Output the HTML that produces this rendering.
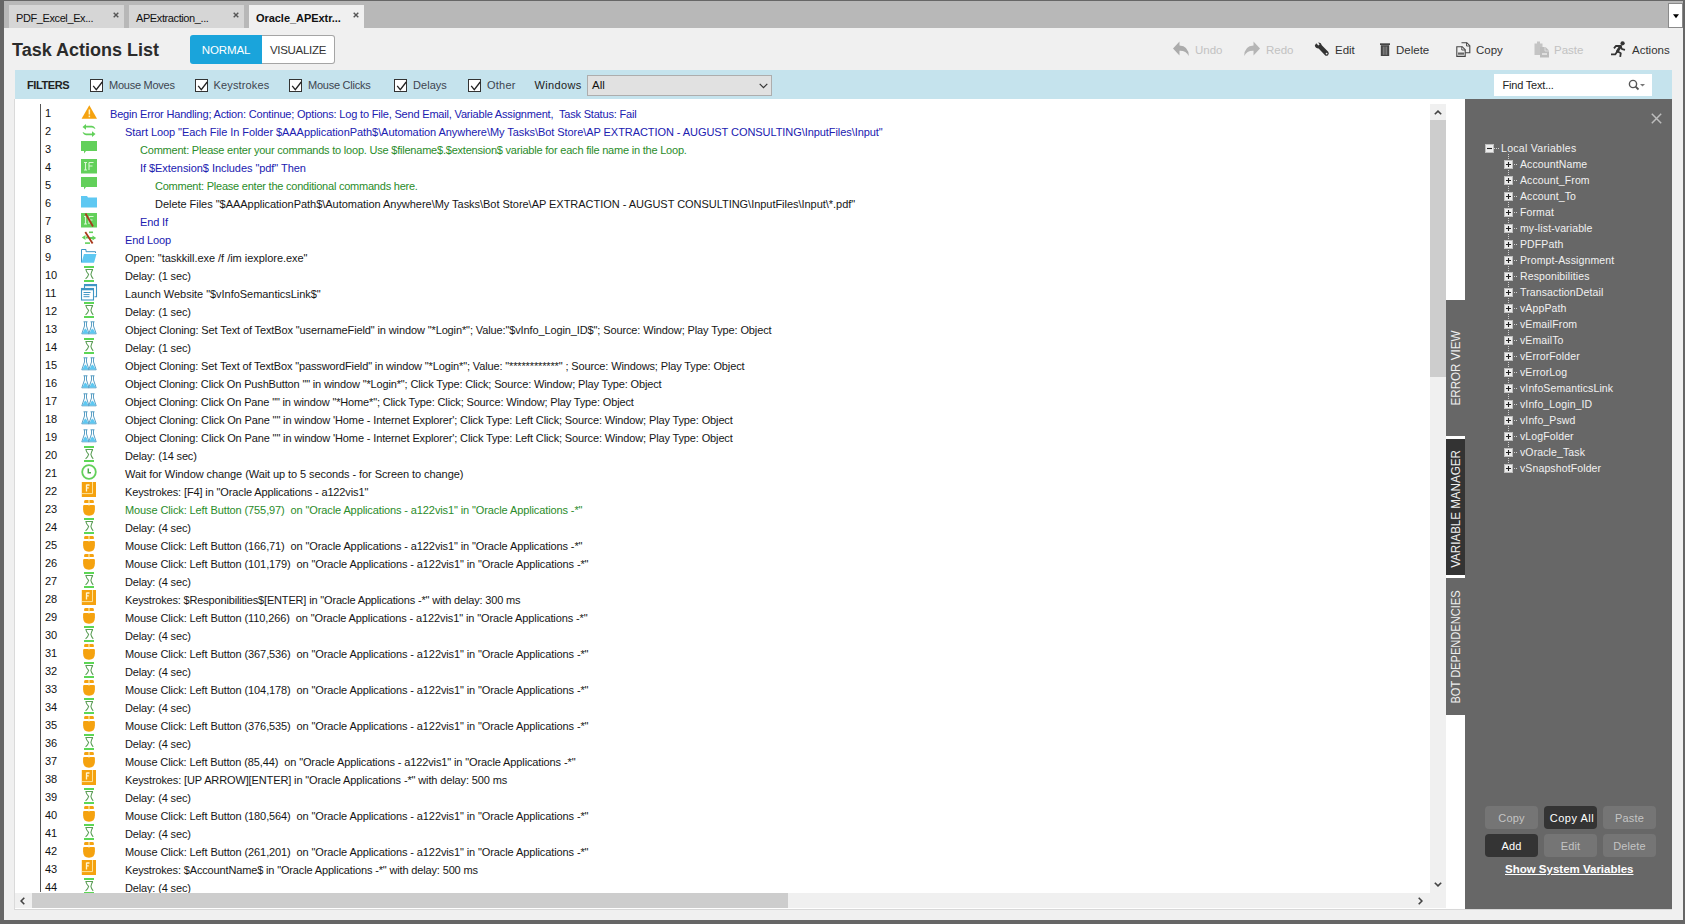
<!DOCTYPE html>
<html><head><meta charset="utf-8">
<style>
*{box-sizing:border-box;margin:0;padding:0}
html,body{width:1685px;height:924px;overflow:hidden;background:#666;font-family:"Liberation Sans",sans-serif}
.a{position:absolute}
#win{left:4px;top:1px;width:1679px;height:919px;background:#f0f0f0}
#tabbar{left:4px;top:1px;width:1679px;height:27px;background:#b8b8b8}
.tab{top:5px;height:23px;width:115px;background:#d6d6d6;font-size:11px;letter-spacing:-0.4px;color:#111;line-height:26px;padding-left:7px}
.tab .x{position:absolute;left:104px;top:7px;width:6px;height:6px}
.tab.act{background:#f0f0f0;font-weight:bold;letter-spacing:-0.05px}
#ddbtn{left:1668px;top:2.5px;width:14.5px;height:25px;background:#fff;border:1px solid #8a8a8a}
#title{left:12px;top:38.5px;font-size:18px;font-weight:bold;color:#2b2b2b;line-height:22px}
#tog{left:190px;top:35px;width:145px;height:29px}
#tog .n{position:absolute;left:0;top:0;width:72px;height:29px;background:#1aa4db;color:#fff;font-size:11.5px;line-height:31px;text-align:center;border-radius:3px 0 0 3px;letter-spacing:-0.1px}
#tog .v{position:absolute;left:72px;top:0;width:73px;height:29px;background:#fff;border:1px solid #a5a5a5;border-left:none;border-radius:0 3px 3px 0;color:#333;font-size:11.5px;line-height:29px;text-align:center;letter-spacing:-0.3px}
.tb{top:43px;font-size:11.5px;line-height:14px;color:#333}
.tb.dis{color:#c2c2c2}
#filt{left:15px;top:70px;width:1657px;height:29px;background:#c5e3ed}
.fl{top:78px;font-size:11px;line-height:14px;color:#3d4550;letter-spacing:-0.25px}
.cb{top:79px;width:13px;height:13px;border:1px solid #333;background:#fff}
#wsel{left:587px;top:75px;width:185px;height:21px;background:#e1e1e1;border:1px solid #adadad;font-size:11.5px;line-height:19px;padding-left:4px;color:#111}
#find{left:1494px;top:74px;width:158px;height:22px;background:#fff;font-size:11px;line-height:23.5px;padding-left:8.5px;color:#222;letter-spacing:-0.2px}
#content{left:15px;top:99px;width:1450px;height:810px;background:#fff;overflow:hidden}
#leftborder{left:14px;top:99px;width:1px;height:811px;background:#dadada}
#botborder{left:14px;top:909px;width:1658px;height:1px;background:#d8d8d8}
#vline{left:25px;top:5px;width:1px;height:788px;background:#555}
.row{position:absolute;left:0;height:18px;line-height:18px;font-size:11px;white-space:pre;letter-spacing:-0.15px;color:#161616}
.num{position:absolute;left:30px;height:18px;line-height:16px;font-size:11px;color:#111}
.ic{position:absolute;left:66px;width:16px;height:16px;overflow:visible}
.b{color:#2020b0}.g{color:#2a8c2a}
#vsb{left:1415px;top:5px;width:16px;height:804px;background:#f0f0f0}
#hsb{left:0px;top:794px;width:1431px;height:15px;background:#f0f0f0}
#panel{left:1465px;top:99px;width:207px;height:810px;background:#676767}
.stab{left:1446px;width:19px}
.tree{font-size:10.5px;letter-spacing:0.12px;color:#f2f2f2;line-height:16px;white-space:nowrap}
.stxt{font-size:12.5px;color:#eee;line-height:14px;white-space:nowrap}
.pbtn{height:23px;width:53px;border-radius:4px;background:#757575;color:#c4c4c4;font-size:11px;line-height:25px;text-align:center;letter-spacing:0.15px}
.pbtn.on{background:#343434;color:#fff}
</style></head><body>
<div class="a" id="win"></div>
<div class="a" id="tabbar"></div>
<div class="a tab" style="left:9px">PDF_Excel_Ex...<svg class="x" viewBox="0 0 6 6"><path d="M0.7 0.7L5.3 5.3M5.3 0.7L0.7 5.3" stroke="#555" stroke-width="1.4"/></svg></div>
<div class="a tab" style="left:129px">APExtraction_...<svg class="x" viewBox="0 0 6 6"><path d="M0.7 0.7L5.3 5.3M5.3 0.7L0.7 5.3" stroke="#555" stroke-width="1.4"/></svg></div>
<div class="a tab act" style="left:249px">Oracle_APExtr...<svg class="x" viewBox="0 0 6 6"><path d="M0.7 0.7L5.3 5.3M5.3 0.7L0.7 5.3" stroke="#555" stroke-width="1.4"/></svg></div>
<div class="a" id="ddbtn"><svg style="position:absolute;left:3.5px;top:10.5px" width="6" height="5" viewBox="0 0 6 5"><path d="M0 0.2H6L3 4.2Z" fill="#000"/></svg></div>

<div class="a" id="title">Task Actions List</div>
<div class="a" id="tog"><div class="n">NORMAL</div><div class="v">VISUALIZE</div></div>

<svg class="a" style="left:1172px;top:41px" width="18" height="16" viewBox="0 0 18 16"><path d="M1 7.5 L7.5 0.5 V4.5 Q16.5 4.8 16.8 15 Q14 9.5 7.5 9.8 V14.5 Z" fill="#ababab"/></svg>
<div class="a tb dis" style="left:1195px">Undo</div>
<svg class="a" style="left:1243px;top:41px" width="18" height="16" viewBox="0 0 18 16"><path d="M17 7.5 L10.5 0.5 V4.5 Q1.5 4.8 1.2 15 Q4 9.5 10.5 9.8 V14.5 Z" fill="#b5b5b5"/></svg>
<div class="a tb dis" style="left:1266px">Redo</div>
<svg class="a" style="left:1314px;top:42px" width="16" height="15" viewBox="0 0 16 15"><path d="M2.2 1.2 L4.4 3.4 L5.6 2.6 L4.2 0.6 Q7.2 0.2 7.8 3.2 L14.2 9.8 Q15.6 11.6 14 13.2 Q12.2 14.6 10.8 13 L4.6 6.6 Q1.4 6.6 0.8 3.6 Z" fill="#333"/><circle cx="12.6" cy="11.6" r="0.9" fill="#f0f0f0"/></svg>
<div class="a tb" style="left:1335px">Edit</div>
<svg class="a" style="left:1380px;top:43px" width="11" height="14" viewBox="0 0 11 14"><path d="M0 0.3 H10 V2 H0 Z" fill="#444"/><path d="M0.8 2.2 H9.2 V13 H0.8 Z" fill="#444"/><path d="M3.3 3.6V11.8M5 3.6V11.8M6.7 3.6V11.8" stroke="#9a9a9a" stroke-width="0.8"/></svg>
<div class="a tb" style="left:1396px">Delete</div>
<svg class="a" style="left:1456px;top:42px" width="15" height="15" viewBox="0 0 15 15"><path d="M5.5 0.7 H10.8 L13.8 3.7 V10.8 H9" stroke="#444" stroke-width="1.1" fill="none"/><path d="M10.5 0.7 V4 H13.8" stroke="#444" stroke-width="0.9" fill="none"/><path d="M0.8 4.7 H6.2 L9.2 7.7 V14.4 H0.8 Z" stroke="#444" stroke-width="1.1" fill="#f0f0f0"/><path d="M5.8 4.7 V8 H9.2" stroke="#444" stroke-width="0.9" fill="none"/><rect x="2" y="10.5" width="6" height="2.2" fill="#666"/></svg>
<div class="a tb" style="left:1476px">Copy</div>
<svg class="a" style="left:1534px;top:41px" width="16" height="17" viewBox="0 0 16 17"><path d="M0.5 2.5 H3 V0.5 H6 V2.5 H8.5 V6 H6 V14 H0.5 Z" fill="#c4c4c4"/><path d="M6 6 H11.5 L15 9.5 V16.5 H6 Z" fill="#bdbdbd"/><path d="M11 6 V10 H15" stroke="#e6e6e6" stroke-width="0.8" fill="none"/><rect x="8" y="12" width="5" height="2" fill="#e0e0e0"/></svg>
<div class="a tb dis" style="left:1554px">Paste</div>
<svg class="a" style="left:1610px;top:41px" width="17" height="17" viewBox="0 0 17 17"><circle cx="12.6" cy="2.3" r="2.1" fill="#333"/><path d="M10.6 5.2 L7.4 10.2" stroke="#333" stroke-width="2.8" stroke-linecap="round"/><path d="M10.4 5 L6 4.9 L4 7.4 M10.6 5.6 L12.2 8.2 L15 8.8 M7.4 10.2 L5.2 13.4 L1 13.4 M7.4 10.2 L10.8 12.2 L10.2 15.8" stroke="#333" stroke-width="1.8" fill="none" stroke-linejoin="round"/></svg>
<div class="a tb" style="left:1632px">Actions</div>

<div class="a" id="filt"></div>
<div class="a fl" style="left:27px;font-weight:bold;color:#222;font-size:11px;letter-spacing:-0.4px">FILTERS</div>
<div class="a cb" style="left:90px"><svg style="position:absolute;left:1px;top:1px" width="11" height="11" viewBox="0 0 11 11"><path d="M1.2 4.8 L4.3 8.6 L10.2 1" stroke="#222" stroke-width="1.3" fill="none"/></svg></div><div class="a fl" style="left:109px">Mouse Moves</div>
<div class="a cb" style="left:195px"><svg style="position:absolute;left:1px;top:1px" width="11" height="11" viewBox="0 0 11 11"><path d="M1.2 4.8 L4.3 8.6 L10.2 1" stroke="#222" stroke-width="1.3" fill="none"/></svg></div><div class="a fl" style="left:213.5px;letter-spacing:0.15px">Keystrokes</div>
<div class="a cb" style="left:289px"><svg style="position:absolute;left:1px;top:1px" width="11" height="11" viewBox="0 0 11 11"><path d="M1.2 4.8 L4.3 8.6 L10.2 1" stroke="#222" stroke-width="1.3" fill="none"/></svg></div><div class="a fl" style="left:308px">Mouse Clicks</div>
<div class="a cb" style="left:394px"><svg style="position:absolute;left:1px;top:1px" width="11" height="11" viewBox="0 0 11 11"><path d="M1.2 4.8 L4.3 8.6 L10.2 1" stroke="#222" stroke-width="1.3" fill="none"/></svg></div><div class="a fl" style="left:413px;letter-spacing:0.05px">Delays</div>
<div class="a cb" style="left:468px"><svg style="position:absolute;left:1px;top:1px" width="11" height="11" viewBox="0 0 11 11"><path d="M1.2 4.8 L4.3 8.6 L10.2 1" stroke="#222" stroke-width="1.3" fill="none"/></svg></div><div class="a fl" style="left:487px;letter-spacing:0.25px">Other</div>
<div class="a fl" style="left:534.5px;color:#222;letter-spacing:0.35px">Windows</div>
<div class="a" id="wsel">All<svg style="position:absolute;left:171px;top:7px" width="9" height="6" viewBox="0 0 9 6"><path d="M0.7 0.8 L4.5 4.6 L8.3 0.8" stroke="#333" stroke-width="1.2" fill="none"/></svg></div>
<div class="a" id="find">Find Text...<svg style="position:absolute;left:134px;top:5px" width="18" height="12" viewBox="0 0 18 12"><circle cx="5" cy="5" r="3.6" stroke="#555" stroke-width="1.4" fill="none"/><path d="M7.6 7.6 L10.5 10.5" stroke="#555" stroke-width="1.8"/><path d="M12 5 H17 L14.5 7.5 Z" fill="#777"/></svg></div>

<div class="a" id="leftborder"></div>
<div class="a" id="botborder"></div>
<div class="a" id="content">
<div class="a" id="vline"></div>
<!--ROWS-->
<svg width="0" height="0" style="position:absolute"><defs><symbol id="i-warn" viewBox="0 0 16 16" overflow="visible"><path d="M8.3 0.3 L16 13.7 L0.6 13.7 Z" fill="#f5a20f"/><rect x="7.6" y="4.5" width="1.5" height="5" fill="#fff3c4"/><rect x="7.6" y="10.6" width="1.5" height="1.6" fill="#fff3c4"/></symbol><symbol id="i-loop" viewBox="0 0 16 16" overflow="visible"><path d="M1.5 4 L5 1 L5 2.8 L11 2.8 Q13 3 14.5 5.5 L13.5 5.8 Q12 4.6 10.5 4.6 L5 4.6 L5 6.8 Z" fill="#62d05a"/>
<path d="M14.5 11 L11 14 L11 12.2 L5 12.2 Q3 12 1.5 9.5 L2.5 9.2 Q4 10.4 5.5 10.4 L11 10.4 L11 8.2 Z" fill="#62d05a"/></symbol><symbol id="i-cmt" viewBox="0 0 16 16" overflow="visible"><path d="M0 0 H16 V10 H5 L3 12.5 L3 10 H0 Z" fill="#62d05a"/></symbol><symbol id="i-if" viewBox="0 0 16 16" overflow="visible"><rect x="0" y="0" width="16" height="14.5" fill="#62d05a"/>
<path d="M3 3.5h3M4.5 3.5v7.5M3 11h3M8 3.5v7.5M8 3.5h4.5M8 7h3.5" stroke="#d9f7d4" stroke-width="1.1" fill="none"/></symbol><symbol id="i-folder" viewBox="0 0 16 16" overflow="visible"><path d="M0 1 H6 L7 2.5 H16 V12.5 H0 Z" fill="#5ec8f2"/></symbol><symbol id="i-endif" viewBox="0 0 16 16" overflow="visible"><rect x="0" y="0" width="16" height="14.5" fill="#62d05a"/>
<path d="M3 3.5h3M4.5 3.5v7.5M3 11h3M8 3.5v7.5M8 3.5h4.5M8 7h3.5" stroke="#d9f7d4" stroke-width="1.1" fill="none"/><path d="M4.5 0.5 L12 13.5" stroke="#a8381c" stroke-width="1.8"/></symbol><symbol id="i-endloop" viewBox="0 0 16 16" overflow="visible"><path d="M0.8 6.5 L4.5 4 L4.5 9 Z M5 5.5 H8 V7.5 H5 Z" fill="#62d05a"/><path d="M15.2 7 L11.5 4.5 L11.5 9.5 Z M8.5 6 H11.5 V8 H8.5Z" fill="#62d05a"/><rect x="8" y="0.5" width="4" height="1.6" fill="#62d05a"/><rect x="4" y="11.3" width="5" height="1.6" fill="#62d05a"/><path d="M4.3 1 L11.6 12.5" stroke="#a8381c" stroke-width="1.8"/></symbol><symbol id="i-open" viewBox="0 0 16 16" overflow="visible"><path d="M0.5 13.5 V0.5 H5 V2.7 H14.5 V4" stroke="#3f95c4" stroke-width="1" fill="none"/><path d="M3 5 H15.5 L13 13.8 H0.5 Z" fill="#5ec8f2"/></symbol><symbol id="i-delay" viewBox="0 0 16 16" overflow="visible"><rect x="3" y="-1" width="10" height="2" fill="#5cd655"/><rect x="3" y="13" width="10" height="2" fill="#5cd655"/><path d="M4.4 2.4 H12 M4.8 2.4 Q5.4 5.2 7.6 7.4 Q7.3 9.3 4.6 11.8 M11.8 2.4 Q10.4 4.6 9.9 7.4 Q10.2 9.6 12.2 11.8" stroke="#5a9e55" stroke-width="1.05" fill="none"/></symbol><symbol id="i-web" viewBox="0 0 16 16" overflow="visible"><path d="M3.5 5 V-0.5 H15.5 V11.8 H13.5" stroke="#3f95c4" stroke-width="1.1" fill="none"/><rect x="3.5" y="-0.6" width="12" height="1.8" fill="#3f95c4"/><rect x="0.5" y="3.5" width="12" height="11.5" stroke="#3f95c4" stroke-width="1.1" fill="#fff"/><rect x="0.5" y="3.4" width="12" height="1.9" fill="#3f95c4"/><path d="M2.5 7.5h7M2.5 9.6h6M2.5 11.7h6" stroke="#3f95c4" stroke-width="1"/></symbol><symbol id="i-flask" viewBox="0 0 16 16" overflow="visible"><path d="M2.5 0.8 H6.5 M3.5 0.8 V5 L0.8 12.8 H8 L5.5 5 V0.8" stroke="#5a9ec4" stroke-width="1" fill="none"/><path d="M1.3 12.5 L3.2 8.8 L4.4 7.6 L5.6 8.8 L7.6 12.5 Z" fill="#5ec8f2"/>
<path d="M9.5 0.8 H13.5 M10.5 0.8 V5 L7.8 12.8 H15.2 L12.5 5 V0.8" stroke="#5a9ec4" stroke-width="1" fill="none"/><path d="M8.3 12.5 L10.2 8.8 L11.4 7.6 L12.6 8.8 L14.8 12.5 Z" fill="#5ec8f2"/></symbol><symbol id="i-clock" viewBox="0 0 16 16" overflow="visible"><circle cx="8" cy="7" r="6.8" stroke="#62d05a" stroke-width="1.8" fill="none"/><path d="M7.3 3.5 V7.8 H10" stroke="#4aa84a" stroke-width="1.5" fill="none"/></symbol><symbol id="i-key" viewBox="0 0 16 16" overflow="visible"><rect x="0.8" y="-1" width="14.2" height="15" fill="#f5a20f"/><path d="M11.5 -1 V10.6 H0.8" stroke="#ffe9a8" stroke-width="0.9" fill="none"/><path d="M5.5 1.5 V8.5 M5.5 2 H8.5 M5.5 4.8 H7.8" stroke="#fff6d6" stroke-width="1.3" fill="none"/></symbol><symbol id="i-mouse" viewBox="0 0 16 16" overflow="visible"><path d="M3.2 1.9 V0.2 Q3.2 -1 4.5 -1 H11.5 Q12.8 -1 12.8 0.2 V1.9 Z" fill="#f5a20f"/><path d="M2.1 4.9 Q2.1 3.9 3.1 3.9 H12.9 Q13.9 3.9 13.9 4.9 V8.5 Q13.9 14.7 8 14.7 Q2.1 14.7 2.1 8.5 Z" fill="#f5a20f"/><path d="M8 -1 V4.6" stroke="#fff6c8" stroke-width="1"/></symbol></defs></svg>
<div class="num" style="top:6px">1</div>
<svg class="ic" style="top:6px" viewBox="0 0 16 16" width="16" height="16"><use href="#i-warn"/></svg>
<div class="row b" style="top:6px;left:95px;letter-spacing:-0.186px">Begin Error Handling; Action: Continue; Options: Log to File, Send Email, Variable Assignment,  Task Status: Fail</div>
<div class="num" style="top:24px">2</div>
<svg class="ic" style="top:24px" viewBox="0 0 16 16" width="16" height="16"><use href="#i-loop"/></svg>
<div class="row b" style="top:24px;left:110px;letter-spacing:-0.065px">Start Loop "Each File In Folder $AAApplicationPath$\Automation Anywhere\My Tasks\Bot Store\AP EXTRACTION - AUGUST CONSULTING\InputFiles\Input"</div>
<div class="num" style="top:42px">3</div>
<svg class="ic" style="top:42px" viewBox="0 0 16 16" width="16" height="16"><use href="#i-cmt"/></svg>
<div class="row g" style="top:42px;left:125px;letter-spacing:-0.213px">Comment: Please enter your commands to loop. Use $filename$.$extension$ variable for each file name in the Loop.</div>
<div class="num" style="top:60px">4</div>
<svg class="ic" style="top:60px" viewBox="0 0 16 16" width="16" height="16"><use href="#i-if"/></svg>
<div class="row b" style="top:60px;left:125px;letter-spacing:-0.059px">If $Extension$ Includes "pdf" Then</div>
<div class="num" style="top:78px">5</div>
<svg class="ic" style="top:78px" viewBox="0 0 16 16" width="16" height="16"><use href="#i-cmt"/></svg>
<div class="row g" style="top:78px;left:140px;letter-spacing:-0.228px">Comment: Please enter the conditional commands here.</div>
<div class="num" style="top:96px">6</div>
<svg class="ic" style="top:96px" viewBox="0 0 16 16" width="16" height="16"><use href="#i-folder"/></svg>
<div class="row" style="top:96px;left:140px;letter-spacing:-0.034px">Delete Files "$AAApplicationPath$\Automation Anywhere\My Tasks\Bot Store\AP EXTRACTION - AUGUST CONSULTING\InputFiles\Input\*.pdf"</div>
<div class="num" style="top:114px">7</div>
<svg class="ic" style="top:114px" viewBox="0 0 16 16" width="16" height="16"><use href="#i-endif"/></svg>
<div class="row b" style="top:114px;left:125px;letter-spacing:-0.15px">End If</div>
<div class="num" style="top:132px">8</div>
<svg class="ic" style="top:132px" viewBox="0 0 16 16" width="16" height="16"><use href="#i-endloop"/></svg>
<div class="row b" style="top:132px;left:110px;letter-spacing:-0.15px">End Loop</div>
<div class="num" style="top:150px">9</div>
<svg class="ic" style="top:150px" viewBox="0 0 16 16" width="16" height="16"><use href="#i-open"/></svg>
<div class="row" style="top:150px;left:110px;letter-spacing:-0.035px">Open: "taskkill.exe /f /im iexplore.exe"</div>
<div class="num" style="top:168px">10</div>
<svg class="ic" style="top:168px" viewBox="0 0 16 16" width="16" height="16"><use href="#i-delay"/></svg>
<div class="row" style="top:168px;left:110px;letter-spacing:-0.15px">Delay: (1 sec)</div>
<div class="num" style="top:186px">11</div>
<svg class="ic" style="top:186px" viewBox="0 0 16 16" width="16" height="16"><use href="#i-web"/></svg>
<div class="row" style="top:186px;left:110px;letter-spacing:-0.039px">Launch Website "$vInfoSemanticsLink$"</div>
<div class="num" style="top:204px">12</div>
<svg class="ic" style="top:204px" viewBox="0 0 16 16" width="16" height="16"><use href="#i-delay"/></svg>
<div class="row" style="top:204px;left:110px;letter-spacing:-0.15px">Delay: (1 sec)</div>
<div class="num" style="top:222px">13</div>
<svg class="ic" style="top:222px" viewBox="0 0 16 16" width="16" height="16"><use href="#i-flask"/></svg>
<div class="row" style="top:222px;left:110px;letter-spacing:-0.119px">Object Cloning: Set Text of TextBox "usernameField" in window "*Login*"; Value:"$vInfo_Login_ID$"; Source: Window; Play Type: Object</div>
<div class="num" style="top:240px">14</div>
<svg class="ic" style="top:240px" viewBox="0 0 16 16" width="16" height="16"><use href="#i-delay"/></svg>
<div class="row" style="top:240px;left:110px;letter-spacing:-0.15px">Delay: (1 sec)</div>
<div class="num" style="top:258px">15</div>
<svg class="ic" style="top:258px" viewBox="0 0 16 16" width="16" height="16"><use href="#i-flask"/></svg>
<div class="row" style="top:258px;left:110px;letter-spacing:-0.135px">Object Cloning: Set Text of TextBox "passwordField" in window "*Login*"; Value: "************" ; Source: Windows; Play Type: Object</div>
<div class="num" style="top:276px">16</div>
<svg class="ic" style="top:276px" viewBox="0 0 16 16" width="16" height="16"><use href="#i-flask"/></svg>
<div class="row" style="top:276px;left:110px;letter-spacing:-0.15px">Object Cloning: Click On PushButton "" in window "*Login*"; Click Type: Click; Source: Window; Play Type: Object</div>
<div class="num" style="top:294px">17</div>
<svg class="ic" style="top:294px" viewBox="0 0 16 16" width="16" height="16"><use href="#i-flask"/></svg>
<div class="row" style="top:294px;left:110px;letter-spacing:-0.15px">Object Cloning: Click On Pane "" in window "*Home*"; Click Type: Click; Source: Window; Play Type: Object</div>
<div class="num" style="top:312px">18</div>
<svg class="ic" style="top:312px" viewBox="0 0 16 16" width="16" height="16"><use href="#i-flask"/></svg>
<div class="row" style="top:312px;left:110px;letter-spacing:-0.134px">Object Cloning: Click On Pane "" in window 'Home - Internet Explorer'; Click Type: Left Click; Source: Window; Play Type: Object</div>
<div class="num" style="top:330px">19</div>
<svg class="ic" style="top:330px" viewBox="0 0 16 16" width="16" height="16"><use href="#i-flask"/></svg>
<div class="row" style="top:330px;left:110px;letter-spacing:-0.134px">Object Cloning: Click On Pane "" in window 'Home - Internet Explorer'; Click Type: Left Click; Source: Window; Play Type: Object</div>
<div class="num" style="top:348px">20</div>
<svg class="ic" style="top:348px" viewBox="0 0 16 16" width="16" height="16"><use href="#i-delay"/></svg>
<div class="row" style="top:348px;left:110px;letter-spacing:-0.15px">Delay: (14 sec)</div>
<div class="num" style="top:366px">21</div>
<svg class="ic" style="top:366px" viewBox="0 0 16 16" width="16" height="16"><use href="#i-clock"/></svg>
<div class="row" style="top:366px;left:110px;letter-spacing:-0.075px">Wait for Window change (Wait up to 5 seconds - for Screen to change)</div>
<div class="num" style="top:384px">22</div>
<svg class="ic" style="top:384px" viewBox="0 0 16 16" width="16" height="16"><use href="#i-key"/></svg>
<div class="row" style="top:384px;left:110px;letter-spacing:-0.13px">Keystrokes: [F4] in "Oracle Applications - a122vis1"</div>
<div class="num" style="top:402px">23</div>
<svg class="ic" style="top:402px" viewBox="0 0 16 16" width="16" height="16"><use href="#i-mouse"/></svg>
<div class="row g" style="top:402px;left:110px;letter-spacing:-0.109px">Mouse Click: Left Button (755,97)  on "Oracle Applications - a122vis1" in "Oracle Applications -*"</div>
<div class="num" style="top:420px">24</div>
<svg class="ic" style="top:420px" viewBox="0 0 16 16" width="16" height="16"><use href="#i-delay"/></svg>
<div class="row" style="top:420px;left:110px;letter-spacing:-0.15px">Delay: (4 sec)</div>
<div class="num" style="top:438px">25</div>
<svg class="ic" style="top:438px" viewBox="0 0 16 16" width="16" height="16"><use href="#i-mouse"/></svg>
<div class="row" style="top:438px;left:110px;letter-spacing:-0.109px">Mouse Click: Left Button (166,71)  on "Oracle Applications - a122vis1" in "Oracle Applications -*"</div>
<div class="num" style="top:456px">26</div>
<svg class="ic" style="top:456px" viewBox="0 0 16 16" width="16" height="16"><use href="#i-mouse"/></svg>
<div class="row" style="top:456px;left:110px;letter-spacing:-0.109px">Mouse Click: Left Button (101,179)  on "Oracle Applications - a122vis1" in "Oracle Applications -*"</div>
<div class="num" style="top:474px">27</div>
<svg class="ic" style="top:474px" viewBox="0 0 16 16" width="16" height="16"><use href="#i-delay"/></svg>
<div class="row" style="top:474px;left:110px;letter-spacing:-0.15px">Delay: (4 sec)</div>
<div class="num" style="top:492px">28</div>
<svg class="ic" style="top:492px" viewBox="0 0 16 16" width="16" height="16"><use href="#i-key"/></svg>
<div class="row" style="top:492px;left:110px;letter-spacing:-0.162px">Keystrokes: $Responibilities$[ENTER] in "Oracle Applications -*" with delay: 300 ms</div>
<div class="num" style="top:510px">29</div>
<svg class="ic" style="top:510px" viewBox="0 0 16 16" width="16" height="16"><use href="#i-mouse"/></svg>
<div class="row" style="top:510px;left:110px;letter-spacing:-0.109px">Mouse Click: Left Button (110,266)  on "Oracle Applications - a122vis1" in "Oracle Applications -*"</div>
<div class="num" style="top:528px">30</div>
<svg class="ic" style="top:528px" viewBox="0 0 16 16" width="16" height="16"><use href="#i-delay"/></svg>
<div class="row" style="top:528px;left:110px;letter-spacing:-0.15px">Delay: (4 sec)</div>
<div class="num" style="top:546px">31</div>
<svg class="ic" style="top:546px" viewBox="0 0 16 16" width="16" height="16"><use href="#i-mouse"/></svg>
<div class="row" style="top:546px;left:110px;letter-spacing:-0.109px">Mouse Click: Left Button (367,536)  on "Oracle Applications - a122vis1" in "Oracle Applications -*"</div>
<div class="num" style="top:564px">32</div>
<svg class="ic" style="top:564px" viewBox="0 0 16 16" width="16" height="16"><use href="#i-delay"/></svg>
<div class="row" style="top:564px;left:110px;letter-spacing:-0.15px">Delay: (4 sec)</div>
<div class="num" style="top:582px">33</div>
<svg class="ic" style="top:582px" viewBox="0 0 16 16" width="16" height="16"><use href="#i-mouse"/></svg>
<div class="row" style="top:582px;left:110px;letter-spacing:-0.109px">Mouse Click: Left Button (104,178)  on "Oracle Applications - a122vis1" in "Oracle Applications -*"</div>
<div class="num" style="top:600px">34</div>
<svg class="ic" style="top:600px" viewBox="0 0 16 16" width="16" height="16"><use href="#i-delay"/></svg>
<div class="row" style="top:600px;left:110px;letter-spacing:-0.15px">Delay: (4 sec)</div>
<div class="num" style="top:618px">35</div>
<svg class="ic" style="top:618px" viewBox="0 0 16 16" width="16" height="16"><use href="#i-mouse"/></svg>
<div class="row" style="top:618px;left:110px;letter-spacing:-0.109px">Mouse Click: Left Button (376,535)  on "Oracle Applications - a122vis1" in "Oracle Applications -*"</div>
<div class="num" style="top:636px">36</div>
<svg class="ic" style="top:636px" viewBox="0 0 16 16" width="16" height="16"><use href="#i-delay"/></svg>
<div class="row" style="top:636px;left:110px;letter-spacing:-0.15px">Delay: (4 sec)</div>
<div class="num" style="top:654px">37</div>
<svg class="ic" style="top:654px" viewBox="0 0 16 16" width="16" height="16"><use href="#i-mouse"/></svg>
<div class="row" style="top:654px;left:110px;letter-spacing:-0.119px">Mouse Click: Left Button (85,44)  on "Oracle Applications - a122vis1" in "Oracle Applications -*"</div>
<div class="num" style="top:672px">38</div>
<svg class="ic" style="top:672px" viewBox="0 0 16 16" width="16" height="16"><use href="#i-key"/></svg>
<div class="row" style="top:672px;left:110px;letter-spacing:-0.123px">Keystrokes: [UP ARROW][ENTER] in "Oracle Applications -*" with delay: 500 ms</div>
<div class="num" style="top:690px">39</div>
<svg class="ic" style="top:690px" viewBox="0 0 16 16" width="16" height="16"><use href="#i-delay"/></svg>
<div class="row" style="top:690px;left:110px;letter-spacing:-0.15px">Delay: (4 sec)</div>
<div class="num" style="top:708px">40</div>
<svg class="ic" style="top:708px" viewBox="0 0 16 16" width="16" height="16"><use href="#i-mouse"/></svg>
<div class="row" style="top:708px;left:110px;letter-spacing:-0.109px">Mouse Click: Left Button (180,564)  on "Oracle Applications - a122vis1" in "Oracle Applications -*"</div>
<div class="num" style="top:726px">41</div>
<svg class="ic" style="top:726px" viewBox="0 0 16 16" width="16" height="16"><use href="#i-delay"/></svg>
<div class="row" style="top:726px;left:110px;letter-spacing:-0.15px">Delay: (4 sec)</div>
<div class="num" style="top:744px">42</div>
<svg class="ic" style="top:744px" viewBox="0 0 16 16" width="16" height="16"><use href="#i-mouse"/></svg>
<div class="row" style="top:744px;left:110px;letter-spacing:-0.109px">Mouse Click: Left Button (261,201)  on "Oracle Applications - a122vis1" in "Oracle Applications -*"</div>
<div class="num" style="top:762px">43</div>
<svg class="ic" style="top:762px" viewBox="0 0 16 16" width="16" height="16"><use href="#i-key"/></svg>
<div class="row" style="top:762px;left:110px;letter-spacing:-0.15px">Keystrokes: $AccountName$ in "Oracle Applications -*" with delay: 500 ms</div>
<div class="num" style="top:780px">44</div>
<svg class="ic" style="top:780px" viewBox="0 0 16 16" width="16" height="16"><use href="#i-delay"/></svg>
<div class="row" style="top:780px;left:110px;letter-spacing:-0.15px">Delay: (4 sec)</div>
<!--/ROWS-->
<div class="a" id="vsb"><div class="a" style="left:0;top:16px;width:16px;height:257px;background:#cdcdcd"></div>
<svg class="a" style="left:4px;top:6px" width="8" height="5" viewBox="0 0 8 5"><path d="M0.8 4.3 L4 1.1 L7.2 4.3" stroke="#444" stroke-width="1.6" fill="none"/></svg>
<svg class="a" style="left:4px;top:777.5px" width="8" height="5" viewBox="0 0 8 5"><path d="M0.8 0.7 L4 3.9 L7.2 0.7" stroke="#444" stroke-width="1.6" fill="none"/></svg></div>
<div class="a" id="hsb"><div class="a" style="left:17px;top:0;width:756px;height:15px;background:#cdcdcd"></div>
<svg class="a" style="left:5px;top:4px" width="5" height="8" viewBox="0 0 5 8"><path d="M4.3 0.8 L1.1 4 L4.3 7.2" stroke="#444" stroke-width="1.6" fill="none"/></svg>
<svg class="a" style="left:1403px;top:4px" width="5" height="8" viewBox="0 0 5 8"><path d="M0.7 0.8 L3.9 4 L0.7 7.2" stroke="#444" stroke-width="1.6" fill="none"/></svg></div>
</div>
<div class="a" id="panel"></div>
<!--PANEL-->
<svg class="a" style="left:1651px;top:113px" width="11" height="11" viewBox="0 0 11 11"><path d="M0.8 0.8L10.2 10.2M10.2 0.8L0.8 10.2" stroke="#bdbdbd" stroke-width="1.5"/></svg>
<svg class="a" style="left:1485px;top:144px" width="9" height="9" viewBox="0 0 9 9"><rect x="0.5" y="0.5" width="8" height="8" fill="#ececec" stroke="#bdbdbd"/><path d="M2 4.5H7" stroke="#222" stroke-width="1.1"/></svg>
<div class="a tree" style="left:1501px;top:140px;letter-spacing:0.3px">Local Variables</div>
<div class="a" style="left:1494px;top:148px;width:6px;height:1px;background:repeating-linear-gradient(90deg,#cfcfcf 0 1px,transparent 1px 2px)"></div>
<div class="a" style="left:1508px;top:154px;width:1px;height:310px;background:repeating-linear-gradient(180deg,#cfcfcf 0 1px,transparent 1px 2px)"></div>
<svg class="a" style="left:1504px;top:160px" width="9" height="9" viewBox="0 0 9 9"><rect x="0.5" y="0.5" width="8" height="8" fill="#ececec" stroke="#bdbdbd"/><path d="M2 4.5H7M4.5 2V7" stroke="#222" stroke-width="1.1"/></svg>
<div class="a" style="left:1514px;top:164px;width:4px;height:1px;background:repeating-linear-gradient(90deg,#cfcfcf 0 1px,transparent 1px 2px)"></div>
<div class="a tree" style="left:1520px;top:156px">AccountName</div>
<svg class="a" style="left:1504px;top:176px" width="9" height="9" viewBox="0 0 9 9"><rect x="0.5" y="0.5" width="8" height="8" fill="#ececec" stroke="#bdbdbd"/><path d="M2 4.5H7M4.5 2V7" stroke="#222" stroke-width="1.1"/></svg>
<div class="a" style="left:1514px;top:180px;width:4px;height:1px;background:repeating-linear-gradient(90deg,#cfcfcf 0 1px,transparent 1px 2px)"></div>
<div class="a tree" style="left:1520px;top:172px">Account_From</div>
<svg class="a" style="left:1504px;top:192px" width="9" height="9" viewBox="0 0 9 9"><rect x="0.5" y="0.5" width="8" height="8" fill="#ececec" stroke="#bdbdbd"/><path d="M2 4.5H7M4.5 2V7" stroke="#222" stroke-width="1.1"/></svg>
<div class="a" style="left:1514px;top:196px;width:4px;height:1px;background:repeating-linear-gradient(90deg,#cfcfcf 0 1px,transparent 1px 2px)"></div>
<div class="a tree" style="left:1520px;top:188px">Account_To</div>
<svg class="a" style="left:1504px;top:208px" width="9" height="9" viewBox="0 0 9 9"><rect x="0.5" y="0.5" width="8" height="8" fill="#ececec" stroke="#bdbdbd"/><path d="M2 4.5H7M4.5 2V7" stroke="#222" stroke-width="1.1"/></svg>
<div class="a" style="left:1514px;top:212px;width:4px;height:1px;background:repeating-linear-gradient(90deg,#cfcfcf 0 1px,transparent 1px 2px)"></div>
<div class="a tree" style="left:1520px;top:204px">Format</div>
<svg class="a" style="left:1504px;top:224px" width="9" height="9" viewBox="0 0 9 9"><rect x="0.5" y="0.5" width="8" height="8" fill="#ececec" stroke="#bdbdbd"/><path d="M2 4.5H7M4.5 2V7" stroke="#222" stroke-width="1.1"/></svg>
<div class="a" style="left:1514px;top:228px;width:4px;height:1px;background:repeating-linear-gradient(90deg,#cfcfcf 0 1px,transparent 1px 2px)"></div>
<div class="a tree" style="left:1520px;top:220px">my-list-variable</div>
<svg class="a" style="left:1504px;top:240px" width="9" height="9" viewBox="0 0 9 9"><rect x="0.5" y="0.5" width="8" height="8" fill="#ececec" stroke="#bdbdbd"/><path d="M2 4.5H7M4.5 2V7" stroke="#222" stroke-width="1.1"/></svg>
<div class="a" style="left:1514px;top:244px;width:4px;height:1px;background:repeating-linear-gradient(90deg,#cfcfcf 0 1px,transparent 1px 2px)"></div>
<div class="a tree" style="left:1520px;top:236px">PDFPath</div>
<svg class="a" style="left:1504px;top:256px" width="9" height="9" viewBox="0 0 9 9"><rect x="0.5" y="0.5" width="8" height="8" fill="#ececec" stroke="#bdbdbd"/><path d="M2 4.5H7M4.5 2V7" stroke="#222" stroke-width="1.1"/></svg>
<div class="a" style="left:1514px;top:260px;width:4px;height:1px;background:repeating-linear-gradient(90deg,#cfcfcf 0 1px,transparent 1px 2px)"></div>
<div class="a tree" style="left:1520px;top:252px">Prompt-Assignment</div>
<svg class="a" style="left:1504px;top:272px" width="9" height="9" viewBox="0 0 9 9"><rect x="0.5" y="0.5" width="8" height="8" fill="#ececec" stroke="#bdbdbd"/><path d="M2 4.5H7M4.5 2V7" stroke="#222" stroke-width="1.1"/></svg>
<div class="a" style="left:1514px;top:276px;width:4px;height:1px;background:repeating-linear-gradient(90deg,#cfcfcf 0 1px,transparent 1px 2px)"></div>
<div class="a tree" style="left:1520px;top:268px">Responibilities</div>
<svg class="a" style="left:1504px;top:288px" width="9" height="9" viewBox="0 0 9 9"><rect x="0.5" y="0.5" width="8" height="8" fill="#ececec" stroke="#bdbdbd"/><path d="M2 4.5H7M4.5 2V7" stroke="#222" stroke-width="1.1"/></svg>
<div class="a" style="left:1514px;top:292px;width:4px;height:1px;background:repeating-linear-gradient(90deg,#cfcfcf 0 1px,transparent 1px 2px)"></div>
<div class="a tree" style="left:1520px;top:284px">TransactionDetail</div>
<svg class="a" style="left:1504px;top:304px" width="9" height="9" viewBox="0 0 9 9"><rect x="0.5" y="0.5" width="8" height="8" fill="#ececec" stroke="#bdbdbd"/><path d="M2 4.5H7M4.5 2V7" stroke="#222" stroke-width="1.1"/></svg>
<div class="a" style="left:1514px;top:308px;width:4px;height:1px;background:repeating-linear-gradient(90deg,#cfcfcf 0 1px,transparent 1px 2px)"></div>
<div class="a tree" style="left:1520px;top:300px">vAppPath</div>
<svg class="a" style="left:1504px;top:320px" width="9" height="9" viewBox="0 0 9 9"><rect x="0.5" y="0.5" width="8" height="8" fill="#ececec" stroke="#bdbdbd"/><path d="M2 4.5H7M4.5 2V7" stroke="#222" stroke-width="1.1"/></svg>
<div class="a" style="left:1514px;top:324px;width:4px;height:1px;background:repeating-linear-gradient(90deg,#cfcfcf 0 1px,transparent 1px 2px)"></div>
<div class="a tree" style="left:1520px;top:316px">vEmailFrom</div>
<svg class="a" style="left:1504px;top:336px" width="9" height="9" viewBox="0 0 9 9"><rect x="0.5" y="0.5" width="8" height="8" fill="#ececec" stroke="#bdbdbd"/><path d="M2 4.5H7M4.5 2V7" stroke="#222" stroke-width="1.1"/></svg>
<div class="a" style="left:1514px;top:340px;width:4px;height:1px;background:repeating-linear-gradient(90deg,#cfcfcf 0 1px,transparent 1px 2px)"></div>
<div class="a tree" style="left:1520px;top:332px">vEmailTo</div>
<svg class="a" style="left:1504px;top:352px" width="9" height="9" viewBox="0 0 9 9"><rect x="0.5" y="0.5" width="8" height="8" fill="#ececec" stroke="#bdbdbd"/><path d="M2 4.5H7M4.5 2V7" stroke="#222" stroke-width="1.1"/></svg>
<div class="a" style="left:1514px;top:356px;width:4px;height:1px;background:repeating-linear-gradient(90deg,#cfcfcf 0 1px,transparent 1px 2px)"></div>
<div class="a tree" style="left:1520px;top:348px">vErrorFolder</div>
<svg class="a" style="left:1504px;top:368px" width="9" height="9" viewBox="0 0 9 9"><rect x="0.5" y="0.5" width="8" height="8" fill="#ececec" stroke="#bdbdbd"/><path d="M2 4.5H7M4.5 2V7" stroke="#222" stroke-width="1.1"/></svg>
<div class="a" style="left:1514px;top:372px;width:4px;height:1px;background:repeating-linear-gradient(90deg,#cfcfcf 0 1px,transparent 1px 2px)"></div>
<div class="a tree" style="left:1520px;top:364px">vErrorLog</div>
<svg class="a" style="left:1504px;top:384px" width="9" height="9" viewBox="0 0 9 9"><rect x="0.5" y="0.5" width="8" height="8" fill="#ececec" stroke="#bdbdbd"/><path d="M2 4.5H7M4.5 2V7" stroke="#222" stroke-width="1.1"/></svg>
<div class="a" style="left:1514px;top:388px;width:4px;height:1px;background:repeating-linear-gradient(90deg,#cfcfcf 0 1px,transparent 1px 2px)"></div>
<div class="a tree" style="left:1520px;top:380px">vInfoSemanticsLink</div>
<svg class="a" style="left:1504px;top:400px" width="9" height="9" viewBox="0 0 9 9"><rect x="0.5" y="0.5" width="8" height="8" fill="#ececec" stroke="#bdbdbd"/><path d="M2 4.5H7M4.5 2V7" stroke="#222" stroke-width="1.1"/></svg>
<div class="a" style="left:1514px;top:404px;width:4px;height:1px;background:repeating-linear-gradient(90deg,#cfcfcf 0 1px,transparent 1px 2px)"></div>
<div class="a tree" style="left:1520px;top:396px">vInfo_Login_ID</div>
<svg class="a" style="left:1504px;top:416px" width="9" height="9" viewBox="0 0 9 9"><rect x="0.5" y="0.5" width="8" height="8" fill="#ececec" stroke="#bdbdbd"/><path d="M2 4.5H7M4.5 2V7" stroke="#222" stroke-width="1.1"/></svg>
<div class="a" style="left:1514px;top:420px;width:4px;height:1px;background:repeating-linear-gradient(90deg,#cfcfcf 0 1px,transparent 1px 2px)"></div>
<div class="a tree" style="left:1520px;top:412px">vInfo_Pswd</div>
<svg class="a" style="left:1504px;top:432px" width="9" height="9" viewBox="0 0 9 9"><rect x="0.5" y="0.5" width="8" height="8" fill="#ececec" stroke="#bdbdbd"/><path d="M2 4.5H7M4.5 2V7" stroke="#222" stroke-width="1.1"/></svg>
<div class="a" style="left:1514px;top:436px;width:4px;height:1px;background:repeating-linear-gradient(90deg,#cfcfcf 0 1px,transparent 1px 2px)"></div>
<div class="a tree" style="left:1520px;top:428px">vLogFolder</div>
<svg class="a" style="left:1504px;top:448px" width="9" height="9" viewBox="0 0 9 9"><rect x="0.5" y="0.5" width="8" height="8" fill="#ececec" stroke="#bdbdbd"/><path d="M2 4.5H7M4.5 2V7" stroke="#222" stroke-width="1.1"/></svg>
<div class="a" style="left:1514px;top:452px;width:4px;height:1px;background:repeating-linear-gradient(90deg,#cfcfcf 0 1px,transparent 1px 2px)"></div>
<div class="a tree" style="left:1520px;top:444px">vOracle_Task</div>
<svg class="a" style="left:1504px;top:464px" width="9" height="9" viewBox="0 0 9 9"><rect x="0.5" y="0.5" width="8" height="8" fill="#ececec" stroke="#bdbdbd"/><path d="M2 4.5H7M4.5 2V7" stroke="#222" stroke-width="1.1"/></svg>
<div class="a" style="left:1514px;top:468px;width:4px;height:1px;background:repeating-linear-gradient(90deg,#cfcfcf 0 1px,transparent 1px 2px)"></div>
<div class="a tree" style="left:1520px;top:460px">vSnapshotFolder</div>
<div class="a pbtn" style="left:1485px;top:806px">Copy</div>
<div class="a pbtn on" style="left:1544px;top:806px"><span style="letter-spacing:0.5px;padding-left:3px">Copy All</span></div>
<div class="a pbtn" style="left:1603px;top:806px">Paste</div>
<div class="a pbtn on" style="left:1485px;top:834px">Add</div>
<div class="a pbtn" style="left:1544px;top:834px">Edit</div>
<div class="a pbtn" style="left:1603px;top:834px">Delete</div>
<div class="a" style="left:1505px;top:862px;font-size:11.5px;font-weight:bold;color:#fff;text-decoration:underline;line-height:14px;white-space:nowrap">Show System Variables</div>
<div class="a" style="left:1446px;top:300px;width:19px;height:136px;background:#676767"></div>
<div class="a" style="left:1446px;top:436px;width:19px;height:3px;background:#fff"></div>
<div class="a" style="left:1446px;top:439px;width:19px;height:136px;background:#333"></div>
<div class="a" style="left:1446px;top:575px;width:19px;height:3px;background:#fff"></div>
<div class="a" style="left:1446px;top:578px;width:19px;height:137px;background:#676767"></div>
<div class="a stxt" style="left:1456px;top:368px;transform:translate(-50%,-50%) rotate(-90deg) scaleX(0.93)">ERROR VIEW</div>
<div class="a stxt" style="left:1456px;top:508.5px;transform:translate(-50%,-50%) rotate(-90deg) scaleX(0.926)">VARIABLE MANAGER</div>
<div class="a stxt" style="left:1456px;top:646.5px;transform:translate(-50%,-50%) rotate(-90deg) scaleX(0.886)">BOT DEPENDENCIES</div>
<!--/PANEL-->
</body></html>
